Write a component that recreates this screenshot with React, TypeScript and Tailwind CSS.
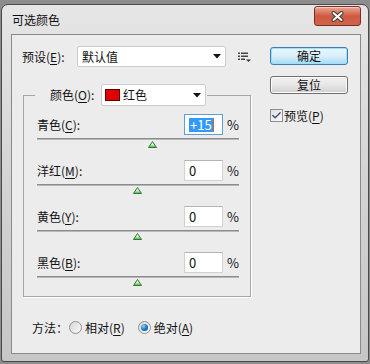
import { Check } from "lucide-react";

interface Row {
  label: string;
  key: string;
  value: number;
  focused?: boolean;
}

const rows: Row[] = [
  { label: "青色", key: "C", value: 15, focused: true },
  { label: "洋红", key: "M", value: 0 },
  { label: "黄色", key: "Y", value: 0 },
  { label: "黑色", key: "B", value: 0 },
];

// mnemonic letter, underlined like a win32 accelerator
function Mn({ children }: { children: string }) {
  return <span className="underline underline-offset-[2px] decoration-[1px]">{children}</span>;
}

function Arrow() {
  return (
    <svg width="8" height="5" viewBox="0 0 8 5" className="shrink-0">
      <polygon points="0,0 8,0 4,4.5" fill="#111" />
    </svg>
  );
}

function Thumb({ value }: { value: number }) {
  const left = ((value + 100) / 200) * 201 - 4.5;
  return (
    <div className="relative h-[7px] mt-[1px]">
      <svg width="9" height="7" viewBox="0 0 9 7" className="absolute top-0" style={{ left }}>
        <defs>
          <linearGradient id={`g${value}`} x1="0" y1="0" x2="0" y2="1">
            <stop offset="0" stopColor="#ffffff" />
            <stop offset="0.55" stopColor="#c8ecc8" />
            <stop offset="1" stopColor="#3faa3f" />
          </linearGradient>
        </defs>
        <polygon points="4.5,0.5 8.5,6.5 0.5,6.5" fill={`url(#g${value})`} stroke="#2f7a2f" strokeWidth="1" strokeLinejoin="round" />
      </svg>
    </div>
  );
}

function SliderRow({ row }: { row: Row }) {
  return (
    <div className="flex flex-col">
      <div className="flex items-center h-[21px]">
        <div className="flex-1 text-[12px] leading-none">
          {row.label}(<Mn>{row.key}</Mn>):
        </div>
        <div
          className={`w-[39px] h-[21px] bg-white border flex items-center pl-[4px] text-[13px] leading-none ${
            row.focused ? "border-[#5a9fd8]" : "border-[#d2d2d2] border-t-[#b4b4b4]"
          }`}
        >
          {row.focused ? (
            <>
              <span className="bg-[#3399ff] text-white h-[14px] px-[1px] flex items-center">+15</span>
              <span className="w-[1px] h-[14px] bg-[#d0661a]" />
            </>
          ) : (
            <span>{row.value}</span>
          )}
        </div>
        <div className="ml-[4px] w-[12px] text-[13px] leading-none">%</div>
      </div>
      <div className="mt-[3px] h-[2px] bg-[#8c8c8c] border-b border-b-[#b8b8b8]" />
      <Thumb value={row.value} />
    </div>
  );
}

export default function App() {
  return (
    <div className="w-[370px] h-[364px] bg-[#8d8d8d] pt-[4px] pl-[1px] pr-[1px] pb-[2px] font-['Noto_Sans_CJK_SC','Microsoft_YaHei',sans-serif] text-[#111]">
      <div className="h-full rounded-t-[7px] rounded-b-[3px] border border-[#4a4a4a] bg-linear-to-b from-[#e6e6e6] via-[#d3d3d3] to-[#c6c6c6] flex flex-col pl-[9px] pr-[7px] pb-[7px]">
        {/* Title bar */}
        <div className="h-[29px] flex items-start">
          <div className="flex-1 h-full flex items-center pl-[1px] text-[12px] leading-none text-[#101010]">可选颜色</div>
          <div className="mt-[1px] w-[47px] h-[20px] rounded-[3px] border border-[#7c2d1f] bg-linear-to-b from-[#eaa898] via-[#cf5a41] to-[#d0644c] shadow-[inset_0_1px_0_rgba(255,255,255,0.45)] flex items-center justify-center">
            <svg width="13" height="11" viewBox="0 0 13 11">
              <path d="M2.5 2 L10.5 9 M10.5 2 L2.5 9" stroke="#3b3b3b" strokeWidth="4" strokeLinecap="round" />
              <path d="M2.5 2 L10.5 9 M10.5 2 L2.5 9" stroke="#ffffff" strokeWidth="2" strokeLinecap="round" />
            </svg>
          </div>
        </div>

        {/* Client area */}
        <div className="flex-1 border border-[#8a8a8a] bg-[#ececec] flex">
          <div className="w-[246px] flex flex-col">
            {/* Preset row */}
            <div className="flex items-center pl-[10px] mt-[11px] h-[21px]">
              <div className="w-[55px] text-[12px] leading-none">
                预设(<Mn>E</Mn>):
              </div>
              <div className="w-[149px] h-[21px] bg-white border border-[#cdcdcd] rounded-[2px] flex items-center justify-between pl-[4px] pr-[4px] text-[12px] leading-none">
                <span>默认值</span>
                <Arrow />
              </div>
              <svg width="13" height="10" viewBox="0 0 13 10" className="ml-[12px]">
                <rect x="0" y="0.5" width="2" height="1.5" fill="#444" />
                <rect x="3" y="0.5" width="7" height="1.5" fill="#444" />
                <rect x="0" y="3.5" width="2" height="1.5" fill="#444" />
                <rect x="3" y="3.5" width="7" height="1.5" fill="#444" />
                <rect x="0" y="6.5" width="2" height="1.5" fill="#444" />
                <rect x="3" y="6.5" width="4" height="1.5" fill="#444" />
                <polygon points="8,7.5 13,7.5 10.5,10" fill="#333" />
              </svg>
            </div>

            {/* Group box */}
            <fieldset className="ml-[11px] mt-[17px] w-[228px] border border-[#a6a6a6] pl-[13px] pr-[11px] pb-[10px] pt-0 shadow-[1px_1px_0_#ffffff]">
              <legend className="-ml-[2px] pl-[15px] pr-[1px] flex items-center h-[22px]">
                <span className="w-[51px] text-[12px] leading-none">
                  颜色(<Mn>O</Mn>):
                </span>
                <span className="w-[105px] h-[22px] bg-white border border-[#cdcdcd] rounded-[2px] flex items-center pl-[3px] pr-[4px] text-[12px] leading-none">
                  <span className="w-[15px] h-[12px] bg-[#e00000] border border-[#5a0000]" />
                  <span className="ml-[3px] flex-1">红色</span>
                  <Arrow />
                </span>
              </legend>
              <div className="pt-[8px] flex flex-col gap-[12px]">
                {rows.map((r) => (
                  <SliderRow key={r.key} row={r} />
                ))}
              </div>
            </fieldset>

            {/* Method row */}
            <div className="mt-[24px] ml-[20px] flex items-center h-[13px] text-[12px] leading-none">
              <span className="w-[37px]">方法：</span>
              <span className="w-[13px] h-[13px] rounded-full border border-[#8e8f8f] bg-linear-to-br from-[#d6d6d6] to-[#fbfbfb]" />
              <span className="ml-[3px]">
                相对(<Mn>R</Mn>)
              </span>
              <span className="ml-[13px] w-[13px] h-[13px] rounded-full border border-[#8e8f8f] bg-linear-to-br from-[#d6d6d6] to-[#fbfbfb] flex items-center justify-center">
                <span className="w-[7px] h-[7px] rounded-full bg-radial-[at_35%_30%] from-[#8fd0ff] via-[#1e79c4] to-[#0b3f73]" />
              </span>
              <span className="ml-[3px]">
                绝对(<Mn>A</Mn>)
              </span>
            </div>
          </div>

          {/* Right column */}
          <div className="ml-[12px] flex flex-col pt-[12px]">
            <button className="w-[78px] h-[18px] rounded-[3px] border border-[#3c7fb1] bg-linear-to-b from-[#eaf6fd] via-[#d9f0fc] to-[#a7d9f5] shadow-[inset_0_0_0_1px_#9edff9] text-[12px] leading-none text-[#111]">
              确定
            </button>
            <button className="mt-[11px] w-[78px] h-[18px] rounded-[3px] border border-[#707070] bg-linear-to-b from-[#f2f2f2] via-[#e6e6e6] to-[#d0d0d0] shadow-[inset_0_0_0_1px_#fcfcfc] text-[12px] leading-none text-[#111]">
              复位
            </button>
            <div className="mt-[15px] flex items-center h-[13px] text-[12px] leading-none">
              <span className="w-[13px] h-[13px] border border-[#8e8f8f] bg-linear-to-br from-[#dedede] to-[#fbfbfb] flex items-center justify-center">
                <Check size={11} strokeWidth={3} className="text-[#3b4f7a]" />
              </span>
              <span className="ml-[1px]">
                预览(<Mn>P</Mn>)
              </span>
            </div>
          </div>
        </div>
      </div>
    </div>
  );
}
